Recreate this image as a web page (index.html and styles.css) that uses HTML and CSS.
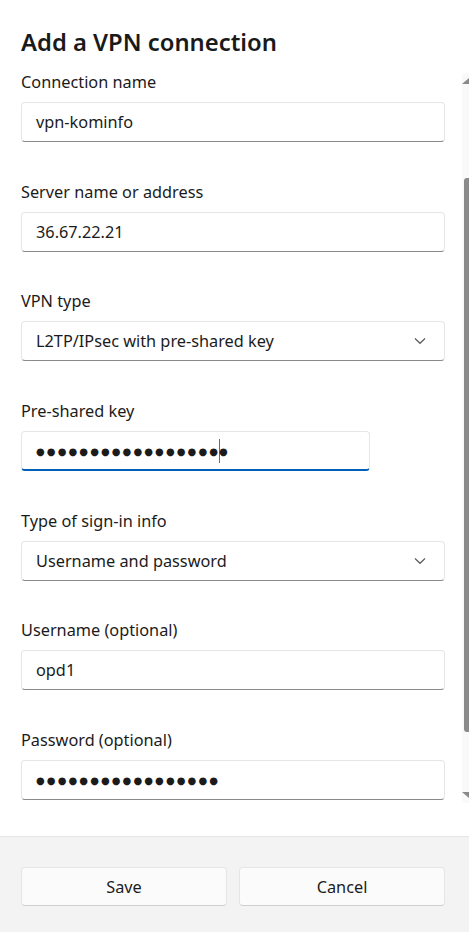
FILE: index.html
```html
<!DOCTYPE html>
<html>
<head>
<meta charset="utf-8">
<link rel="stylesheet" href="styles.css">
</head>
<body>
<div class="dialog">
  <div class="content">
    <h1 class="title">Add a VPN connection</h1>
    <div class="fields">
      <div class="field">
        <div class="label">Connection name</div>
        <div class="input"><span class="value">vpn-kominfo</span></div>
      </div>
      <div class="field">
        <div class="label">Server name or address</div>
        <div class="input"><span class="value">36.67.22.21</span></div>
      </div>
      <div class="field">
        <div class="label">VPN type</div>
        <div class="input select"><span class="value">L2TP/IPsec with pre-shared key</span>
          <svg class="chev" width="12" height="8" viewBox="0 0 12 8"><path d="M1 1.5 L6 6.3 L11 1.5" fill="none" stroke="#5c5c5c" stroke-width="1.2"/></svg>
        </div>
      </div>
      <div class="field">
        <div class="label">Pre-shared key</div>
        <div class="input focused short"><span class="value dots">●●●●●●●●●●●●●●●●●</span><span class="caret"></span><span class="value dots">●</span></div>
      </div>
      <div class="field">
        <div class="label">Type of sign-in info</div>
        <div class="input select"><span class="value">Username and password</span>
          <svg class="chev" width="12" height="8" viewBox="0 0 12 8"><path d="M1 1.5 L6 6.3 L11 1.5" fill="none" stroke="#5c5c5c" stroke-width="1.2"/></svg>
        </div>
      </div>
      <div class="field">
        <div class="label">Username (optional)</div>
        <div class="input"><span class="value">opd1</span></div>
      </div>
      <div class="field">
        <div class="label">Password (optional)</div>
        <div class="input"><span class="value dots">●●●●●●●●●●●●●●●●●</span></div>
      </div>
    </div>
  </div>
  <div class="scrollbar">
    <svg class="arrow up" width="7" height="6" viewBox="0 0 7 6"><path d="M0 6 L7 0 L7 6 Z" fill="#8a8a8a"/></svg>
    <div class="thumb"></div>
    <svg class="arrow down" width="7" height="6" viewBox="0 0 7 6"><path d="M0 0 L7 6 L7 0 Z" fill="#8a8a8a"/></svg>
  </div>
  <div class="footer">
    <button class="btn">Save</button>
    <button class="btn">Cancel</button>
  </div>
</div>
</body>
</html>
```
FILE: styles.css
```css
html, body {
  margin: 0;
  padding: 0;
  background: #ffffff;
}
body {
  font-family: "Noto Sans", "Open Sans", sans-serif;
  color: #1b1b1b;
  width: 469px;
  height: 932px;
  overflow: hidden;
}
.dialog {
  position: relative;
  height: 932px;
  display: flex;
  flex-direction: column;
}
.content {
  flex: 1;
  padding: 26px 24px 0 21px;
}
.title {
  margin: 0;
  font-size: 23.8px;
  line-height: 32px;
  font-weight: 600;
  color: #1a1a1a;
}
.fields {
  margin-top: 14px;
  display: flex;
  flex-direction: column;
  gap: 39.7px;
}
.field {
  display: flex;
  flex-direction: column;
}
.label {
  font-size: 16.3px;
  line-height: 20px;
  margin-bottom: 10px;
}
.input {
  height: 40px;
  box-sizing: border-box;
  border: 1px solid #e6e6e6;
  border-bottom-color: #8a8a8a;
  border-radius: 4px;
  display: flex;
  align-items: center;
  padding: 0 14px;
  font-size: 16.3px;
  background: #fff;
  position: relative;
}
.input.short {
  width: 349px;
}
.input.focused {
  border-bottom: 2px solid #005fb8;
  padding-top: 1px;
}
.select {
  justify-content: space-between;
  padding-right: 18px;
}
.chev {
  display: block;
}
.dots {
  font-family: "DejaVu Sans", sans-serif;
  font-size: 10px;
  letter-spacing: 2.1px;
  color: #1b1b1b;
}
.caret {
  display: inline-block;
  width: 1px;
  height: 24px;
  background: #6b6b6b;
  margin: 0 -1px 0 -1px;
}
.scrollbar {
  position: absolute;
  top: 73px;
  right: 0;
  width: 7px;
  height: 730px;
  background: #f9f9f9;
  border-radius: 4px 0 0 4px;
}
.arrow {
  position: absolute;
  right: 0;
}
.arrow.up { top: 5px; }
.arrow.down { bottom: 5px; }
.thumb {
  position: absolute;
  top: 105px;
  right: 0;
  width: 5px;
  height: 554px;
  background: #8a8a8a;
  border-radius: 3px 0 0 3px;
}
.footer {
  height: 96px;
  box-sizing: border-box;
  border-top: 1px solid #e5e5e5;
  background: #f3f3f3;
  display: flex;
  gap: 12px;
  padding: 30px 24px 0 21px;
}
.btn {
  flex: 1;
  height: 39px;
  box-sizing: border-box;
  border: 1px solid #e5e5e5;
  border-bottom-color: #cfcfcf;
  border-radius: 4px;
  background: #fbfbfb;
  font-family: "Noto Sans", "Open Sans", sans-serif;
  font-size: 16.3px;
  color: #1b1b1b;
  padding: 0;
}
```
